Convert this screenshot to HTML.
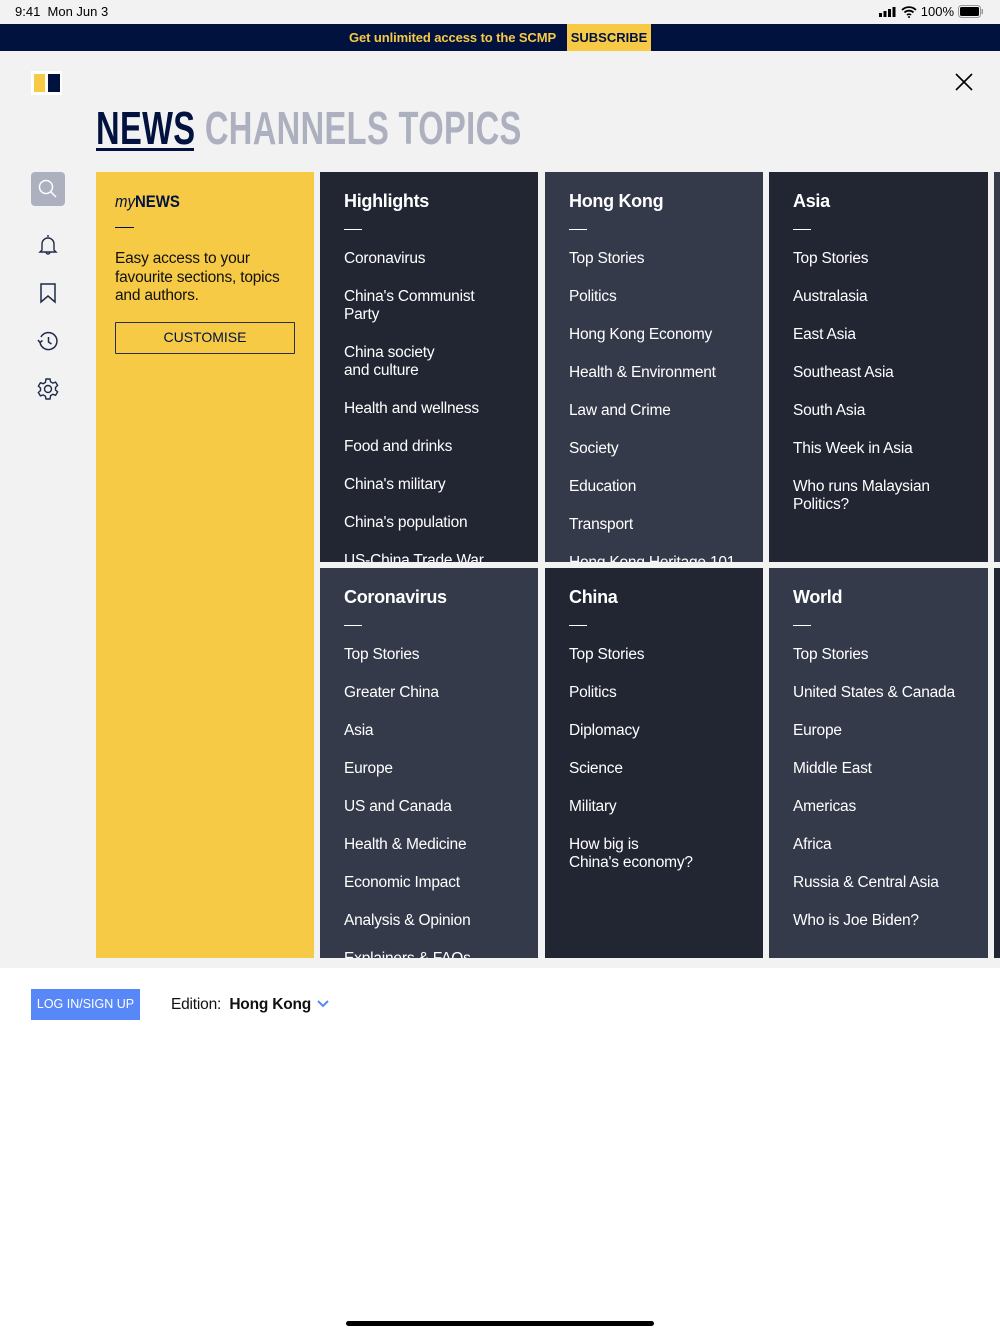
<!DOCTYPE html>
<html><head><meta charset="utf-8"><style>
*{margin:0;padding:0;box-sizing:border-box}
body{width:1000px;height:1334px;background:#fff;font-family:"Liberation Sans",sans-serif;position:relative;overflow:hidden}
.grey{position:absolute;left:0;top:0;width:1000px;height:968px;background:#f2f2f2}
.status{position:absolute;top:4px;left:15px;font-size:13px;color:#000}
.bar{position:absolute;top:24px;left:0;width:1000px;height:27px;background:#02123f}
.bar .t{position:absolute;left:349px;top:6px;color:#f6ca45;font-weight:bold;font-size:13px;letter-spacing:-.1px}
.bar .s{position:absolute;left:567px;top:0;width:84px;height:27px;background:#f6ca45;color:#02123f;font-weight:bold;font-size:13px;text-align:center;line-height:27px}
.tabs{position:absolute;top:101px;left:96px;font-weight:bold;font-size:46px;transform:scaleX(.71);transform-origin:0 0;white-space:nowrap;letter-spacing:.5px}
.tabs span{color:#adb0be}
.uline{position:absolute;left:96px;top:148px;width:98px;height:3px;background:#02123f}
.p{position:absolute;overflow:hidden;color:#fff;padding:19px 0 0 24px}
.d{background:#222633}.l{background:#353a4a}
.p h3{font-size:18px;font-weight:bold;height:26px;letter-spacing:-.3px}
.p .dash{width:18px;height:1px;background:#fff;margin:12px 0 20px}
.p div.i{font-size:15.5px;line-height:18px;margin-bottom:20px;letter-spacing:-.2px}
.ic{position:absolute;left:36px}
</style></head><body>
<div class="grey"></div>
<div class="status">9:41&nbsp; Mon Jun 3</div>
<div style="position:absolute;right:16px;top:4px;font-size:13px;display:flex;align-items:center;gap:4px">
<svg width="18" height="10"><rect x="0" y="6" width="3" height="4"/><rect x="4.5" y="4" width="3" height="6"/><rect x="9" y="2" width="3" height="8"/><rect x="13.5" y="0" width="3" height="10"/></svg>
<svg width="16" height="12" viewBox="0 0 16 12"><path d="M1 4a10 10 0 0 1 14 0M3.5 6.5a6.5 6.5 0 0 1 9 0M6 9a3 3 0 0 1 4 0" stroke="#000" stroke-width="1.8" fill="none"/><circle cx="8" cy="11" r="1"/></svg>
<span>100%</span>
<svg width="26" height="13"><rect x="0.5" y="0.5" width="22" height="12" rx="3" fill="none" stroke="#999"/><rect x="2" y="2" width="19" height="9" rx="1.5"/><rect x="23.5" y="4" width="1.5" height="5" fill="#999"/></svg>
</div>
<div class="bar"><div class="t">Get unlimited access to the SCMP</div><div class="s">SUBSCRIBE</div></div>
<div style="position:absolute;left:31px;top:71px;width:31px;height:24px;background:#fff"></div>
<div style="position:absolute;left:34px;top:74px;width:11px;height:18px;background:#f6ca45"></div>
<div style="position:absolute;left:48px;top:74px;width:12px;height:18px;background:#02123f"></div>
<svg style="position:absolute;left:954px;top:72px" width="20" height="20"><path d="M2 2L18 18M18 2L2 18" stroke="#000" stroke-width="1.6"/></svg>
<div class="tabs"><b style="color:#02123f">NEWS</b> <span>CHANNELS TOPICS</span></div>
<div class="uline"></div>
<div style="position:absolute;left:31px;top:172px;width:34px;height:34px;background:#adb0be;border-radius:4px"></div>
<svg class="ic" style="top:177px" width="24" height="24"><circle cx="10" cy="10" r="6.5" fill="none" stroke="#fff" stroke-width="1.5"/><path d="M15 15l5 5" stroke="#fff" stroke-width="1.5"/></svg>
<svg class="ic" style="top:233px" width="24" height="24" fill="none" stroke="#1d2a4a" stroke-width="1.4"><path d="M12 2v2M6 17V11a6 6 0 0 1 12 0v6l2 2H4zM10 19a2 2 0 0 0 4 0"/></svg>
<svg class="ic" style="top:281px" width="24" height="24" fill="none" stroke="#1d2a4a" stroke-width="1.5"><path d="M5 3h14v18l-7-6-7 6z"/></svg>
<svg class="ic" style="top:329px" width="24" height="24" fill="none" stroke="#1d2a4a" stroke-width="1.5"><path d="M4 13a8.5 8.5 0 1 0 1-5"/><path d="M2 11l2 2.5 2.5-2"/><path d="M12.5 8v5l3 2"/></svg>
<svg class="ic" style="top:377px" width="24" height="24" fill="none" stroke="#1d2a4a" stroke-width="1.4"><circle cx="12" cy="12" r="3.5"/><path d="M10 2h4l.6 2.8 2.3 1.3 2.7-1 2 3.4-2.1 1.9v2.6l2.1 1.9-2 3.4-2.7-1-2.3 1.3L14 22h-4l-.6-2.8-2.3-1.3-2.7 1-2-3.4 2.1-1.9v-2.6L2.4 9.1l2-3.4 2.7 1 2.3-1.3z"/></svg>

<div style="position:absolute;left:96px;top:172px;width:218px;height:786px;background:#f6ca45;padding:20px 19px;color:#111">
<div style="font-size:17px;color:#02123f;font-weight:bold;transform:scaleX(.88);transform-origin:0 0"><i style="font-weight:normal">my</i>NEWS</div>
<div style="width:19px;height:1px;background:#02123f;margin:15px 0 20px"></div>
<div style="font-size:15.5px;line-height:18.5px;letter-spacing:-.2px;padding-top:2px">Easy access to your favourite sections, topics and authors.</div>
<div style="margin-top:16px;border:1.5px solid #2a2f44;height:32px;width:180px;text-align:center;line-height:29px;font-size:14px;color:#02123f;border-radius:1px">CUSTOMISE</div>
</div>

<div class="p d" style="left:320px;top:172px;width:218px;height:390px"><h3>Highlights</h3><div class="dash"></div>
<div class="i">Coronavirus</div><div class="i">China's Communist<br>Party</div><div class="i">China society<br>and culture</div><div class="i">Health and wellness</div><div class="i">Food and drinks</div><div class="i">China's military</div><div class="i">China's population</div><div class="i">US-China Trade War</div></div>
<div class="p l" style="left:545px;top:172px;width:218px;height:390px"><h3>Hong Kong</h3><div class="dash"></div>
<div class="i">Top Stories</div><div class="i">Politics</div><div class="i">Hong Kong Economy</div><div class="i">Health &amp; Environment</div><div class="i">Law and Crime</div><div class="i">Society</div><div class="i">Education</div><div class="i">Transport</div><div class="i">Hong Kong Heritage 101</div></div>
<div class="p d" style="left:769px;top:172px;width:219px;height:390px"><h3>Asia</h3><div class="dash"></div>
<div class="i">Top Stories</div><div class="i">Australasia</div><div class="i">East Asia</div><div class="i">Southeast Asia</div><div class="i">South Asia</div><div class="i">This Week in Asia</div><div class="i">Who runs Malaysian<br>Politics?</div></div>
<div class="p l" style="left:994px;top:172px;width:10px;height:390px"></div>

<div class="p l" style="left:320px;top:568px;width:218px;height:390px"><h3>Coronavirus</h3><div class="dash"></div>
<div class="i">Top Stories</div><div class="i">Greater China</div><div class="i">Asia</div><div class="i">Europe</div><div class="i">US and Canada</div><div class="i">Health &amp; Medicine</div><div class="i">Economic Impact</div><div class="i">Analysis &amp; Opinion</div><div class="i">Explainers &amp; FAQs</div></div>
<div class="p d" style="left:545px;top:568px;width:218px;height:390px"><h3>China</h3><div class="dash"></div>
<div class="i">Top Stories</div><div class="i">Politics</div><div class="i">Diplomacy</div><div class="i">Science</div><div class="i">Military</div><div class="i">How big is<br>China's economy?</div></div>
<div class="p l" style="left:769px;top:568px;width:219px;height:390px"><h3>World</h3><div class="dash"></div>
<div class="i">Top Stories</div><div class="i">United States &amp; Canada</div><div class="i">Europe</div><div class="i">Middle East</div><div class="i">Americas</div><div class="i">Africa</div><div class="i">Russia &amp; Central Asia</div><div class="i">Who is Joe Biden?</div></div>
<div class="p d" style="left:994px;top:568px;width:10px;height:390px"></div>

<div style="position:absolute;left:31px;top:989px;width:109px;height:31px;background:#5887f8;color:#fff;font-size:12.5px;text-align:center;line-height:31px">LOG IN/SIGN UP</div>
<div style="position:absolute;left:171px;top:996px;font-size:15.5px;color:#111;letter-spacing:-.2px">Edition:&nbsp; <b>Hong Kong</b></div>
<svg style="position:absolute;left:316px;top:999px" width="14" height="10"><path d="M2 2l5 5 5-5" stroke="#5887f8" stroke-width="2" fill="none"/></svg>
<div style="position:absolute;left:346px;top:1321px;width:308px;height:5px;border-radius:3px;background:#000"></div>
</body></html>
